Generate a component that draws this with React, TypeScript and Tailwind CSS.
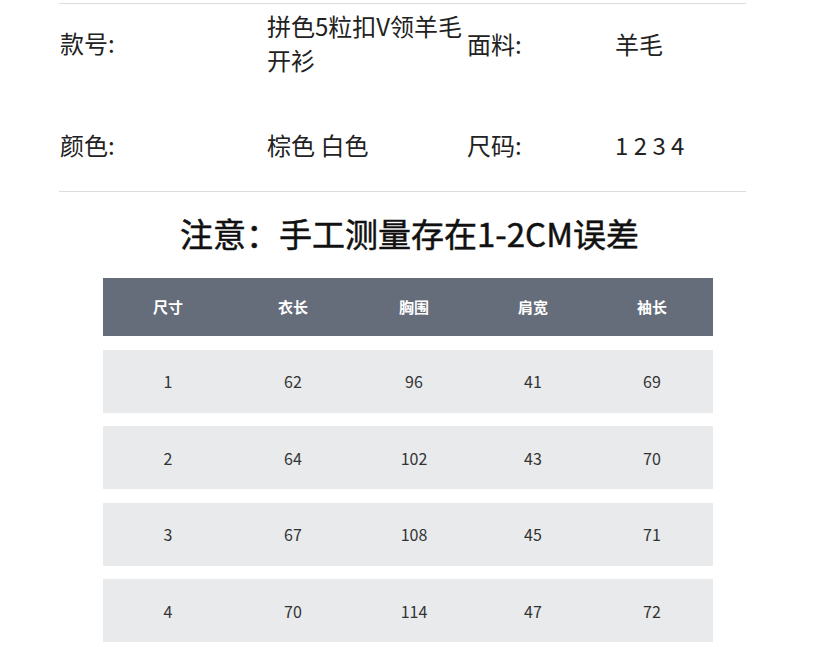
import React from 'react'

const font = { fontFamily: '"Noto Sans CJK SC", "Noto Sans", sans-serif' }

const headers = ['尺寸', '衣长', '胸围', '肩宽', '袖长']

const rows = [
  ['1', '62', '96', '41', '69'],
  ['2', '64', '102', '43', '70'],
  ['3', '67', '108', '45', '71'],
  ['4', '70', '114', '47', '72'],
]

export default function App() {
  return (
    <div className="w-[819px] h-[647px] bg-white overflow-hidden pt-[3px] text-[#222]" style={font}>
      {/* product info */}
      <div className="ml-[59px] w-[687px] border-y border-[#dcdcdc] text-[24px] leading-[34px]">
        <div className="h-[78px] grid grid-cols-[208px_200px_148px_1fr] items-center">
          <div className="pl-[1px]">款号:</div>
          <div>
            拼色5粒扣V领羊毛
            <br />
            开衫
          </div>
          <div className="pt-[2px]">面料:</div>
          <div className="pt-[2px]">羊毛</div>
        </div>
        <div className="h-[109px] pt-[17px] grid grid-cols-[208px_200px_148px_1fr] items-center">
          <div className="pl-[1px]">颜色:</div>
          <div>棕色 白色</div>
          <div>尺码:</div>
          <div>1 2 3 4</div>
        </div>
      </div>

      {/* note */}
      <div className="mt-[17px] text-center text-[33px] leading-[48px] font-normal text-[#111] [-webkit-text-stroke:0.5px_#111]">
        注意：手工测量存在1-2CM误差
      </div>

      {/* size table */}
      <div className="mt-[21px] ml-[103px] w-[610px] flex flex-col gap-[13.5px]">
        <div className="h-[58px] bg-[#656c7a] grid grid-cols-[130px_120px_122px_116px_122px] items-center text-white text-[15px] font-bold">
          {headers.map((h) => (
            <div key={h} className="text-center">{h}</div>
          ))}
        </div>
        {rows.map((r) => (
          <div
            key={r[0]}
            className="h-[63px] bg-[#e9eaec] grid grid-cols-[130px_120px_122px_116px_122px] items-center text-[#333] text-[16px]"
          >
            {r.map((c, i) => (
              <div key={i} className="text-center">{c}</div>
            ))}
          </div>
        ))}
      </div>
    </div>
  )
}
